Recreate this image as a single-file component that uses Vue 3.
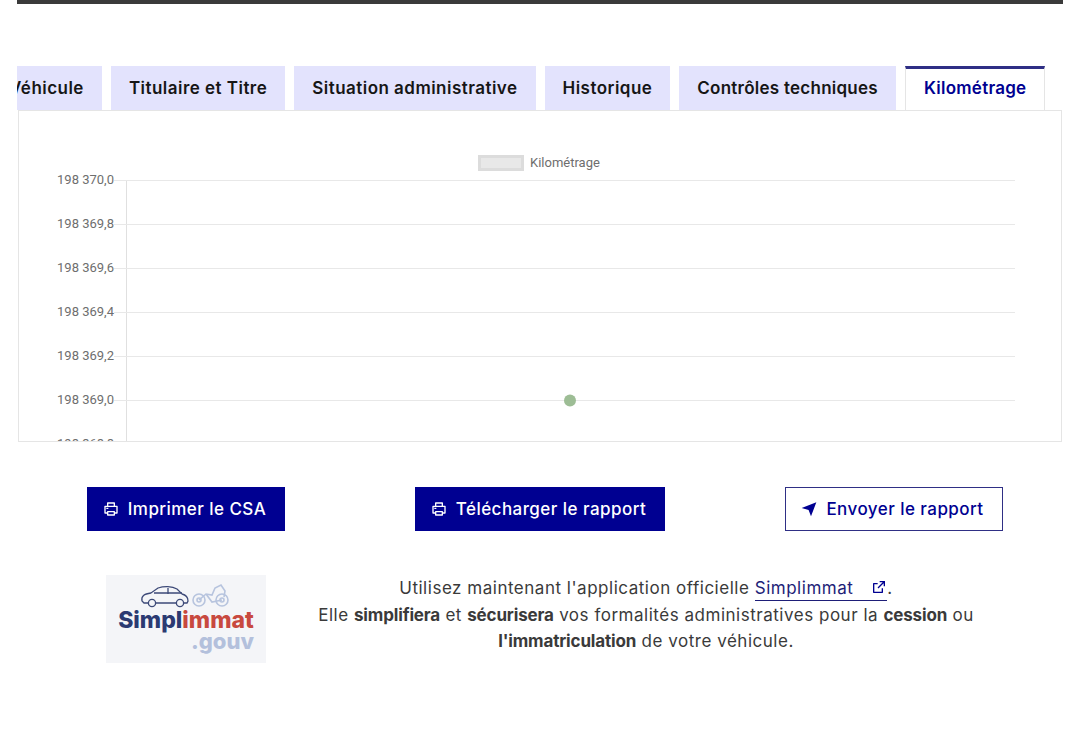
<template>
  <div class="page">
    <div class="top-bar"></div>

    <div class="tabs">
      <div class="tabs-inner">
        <div v-for="tab in tabs" :key="tab" class="tab" :class="{ active: tab == activeTab }">{{ tab }}</div>
      </div>
    </div>

    <div class="panel">
      <svg class="chart" viewBox="19 111 1042 331" width="1042" height="331">
        <rect x="479.5" y="156.5" width="43" height="13" fill="#e8e8e8" stroke="#dcdcdc" stroke-width="3" />
        <text x="530" y="167" class="legend">Kilométrage</text>
        <line x1="126.5" y1="180" x2="126.5" y2="442" class="axis" />
        <g v-for="(tick, i) in ticks" :key="tick">
          <line x1="114" :y1="180.5 + i * 44" x2="1015" :y2="180.5 + i * 44" class="grid" />
          <text x="114" :y="184 + i * 44" class="tick">{{ tick }}</text>
        </g>
        <circle cx="570" cy="400.5" r="6" fill="#9dbd95" />
      </svg>
    </div>

    <div class="actions">
      <button class="btn">
        <svg class="icon" viewBox="0 0 24 24"><path :d="printerPath" /></svg>
        Imprimer le CSA
      </button>
      <button class="btn">
        <svg class="icon" viewBox="0 0 24 24"><path :d="printerPath" /></svg>
        Télécharger le rapport
      </button>
      <button class="btn secondary">
        <svg class="icon" viewBox="0 0 24 24"><path d="M1 10.5 23 2l-8 21-3.6-9.4z" /></svg>
        Envoyer le rapport
      </button>
    </div>

    <div class="footer">
      <div class="logo">
        <svg class="logo-art" viewBox="0 0 90 26" width="90" height="26">
          <g fill="none" stroke="#b7c4de" stroke-width="1.6">
            <circle cx="59" cy="17" r="6" />
            <circle cx="82" cy="17" r="6" />
            <circle cx="59" cy="17" r="2" />
            <circle cx="82" cy="17" r="2" />
            <path d="M59 17l7-6 6 1 3-7 6-3 4 6-1 6M66 11l6 8 10-2" />
          </g>
          <g fill="#f4f5f8" stroke="#3d4a78" stroke-width="1.3">
            <path d="M2 18c-1-5 2-7 9-8l7-5c6-2 14-2 19 1l5 5c4 1 6 3 6 7l-1 2H4z" />
            <path d="M14 10h28M28 5v6" fill="none" />
            <circle cx="12" cy="20" r="3.6" />
            <circle cx="40" cy="20" r="3.6" />
          </g>
        </svg>
        <div class="logo-name">Simpl<span class="logo-red">immat</span></div>
        <div class="logo-gouv">.gouv</div>
      </div>
      <div class="notice">
        Utilisez maintenant l'application officielle
        <a class="link">Simplimmat<svg class="ext" viewBox="0 0 24 24"><path d="M10 6v2H5v11h11v-5h2v6a1 1 0 0 1-1 1H4a1 1 0 0 1-1-1V7a1 1 0 0 1 1-1h6zm11-3v8h-2V6.413l-7.793 7.794-1.414-1.414L17.585 5H13V3h8z" /></svg></a>.<br>
        Elle <b>simplifiera</b> et <b>sécurisera</b> vos formalités administratives pour la <b>cession</b> ou<br>
        <b>l'immatriculation</b> de votre véhicule.
      </div>
    </div>
  </div>
</template>

<script setup>
const tabs = ["Véhicule", "Titulaire et Titre", "Situation administrative", "Historique", "Contrôles techniques", "Kilométrage"];
const activeTab = "Kilométrage";

const ticks = ["198 370,0", "198 369,8", "198 369,6", "198 369,4", "198 369,2", "198 369,0", "198 368,8"];

const printerPath = "M6 19H3a1 1 0 0 1-1-1V8a1 1 0 0 1 1-1h3V3a1 1 0 0 1 1-1h10a1 1 0 0 1 1 1v4h3a1 1 0 0 1 1 1v10a1 1 0 0 1-1 1h-3v2a1 1 0 0 1-1 1H7a1 1 0 0 1-1-1v-2zm0-2v-1a1 1 0 0 1 1-1h10a1 1 0 0 1 1 1v1h2V9H4v8h2zM8 4v3h8V4H8zm0 13v3h8v-3H8zm-3-7h3v2H5v-2z";
</script>

<style>
body {
  background: #fff;
}
</style>

<style scoped>
.page {
  width: 1080px;
  height: 731px;
  overflow: hidden;
  font-family: "Inter", "Open Sans", sans-serif;
  color: #3a3a3a;
}

.top-bar {
  height: 4px;
  margin: 0 17px;
  background: #3a3a3a;
}

.tabs {
  margin: 62px 17px 0 17px;
  height: 44px;
  overflow: hidden;
}

.tabs-inner {
  display: flex;
  gap: 9px;
  margin-left: -26px;
  height: 44px;
}

.tab {
  flex: none;
  display: flex;
  align-items: center;
  padding: 0 18px;
  background: #e3e3fd;
  color: #161616;
  font-size: 17px;
  font-weight: 600;
  letter-spacing: 0.47px;
  white-space: nowrap;
}

.tab:nth-child(n+5) {
  letter-spacing: 0.25px;
}

.tab.active {
  background: #fff;
  color: #000091;
  border-top: 3px solid #2f2f85;
  border-left: 1px solid #e5e5e5;
  border-right: 1px solid #e5e5e5;
  padding-bottom: 3px;
}

.panel {
  height: 332px;
  margin: 0 18px;
  box-sizing: border-box;
  border: 1px solid #e5e5e5;
  overflow: hidden;
}

.chart {
  display: block;
}

.legend {
  font: 13px Roboto, sans-serif;
  fill: #6e6e6e;
}

.tick {
  font: 13px Roboto, sans-serif;
  fill: #6e6e6e;
  text-anchor: end;
}

.grid {
  stroke: #e8e8e8;
  stroke-width: 1;
}

.axis {
  stroke: #e0e0e0;
  stroke-width: 1;
}

.actions {
  display: grid;
  grid-template-columns: repeat(3, 354px);
  justify-content: center;
  justify-items: center;
  margin-top: 45px;
}

.btn {
  display: flex;
  align-items: center;
  gap: 9px;
  height: 44px;
  padding: 0 18px 0 15px;
  box-sizing: border-box;
  border: 1px solid #000091;
  background: #000091;
  color: #fff;
  font-family: inherit;
  font-size: 17px;
  font-weight: 500;
  letter-spacing: 0.45px;
  white-space: nowrap;
}

.btn.secondary {
  background: #fff;
  color: #000091;
  border-color: #2f2f85;
}

.icon {
  width: 16px;
  height: 16px;
  fill: currentColor;
}

.footer {
  display: flex;
  margin: 44px 0 0 106px;
}

.logo {
  width: 160px;
  height: 88px;
  box-sizing: border-box;
  padding: 8px 12px 0 12px;
  background: #f4f5f8;
  font-weight: 800;
}

.logo-art {
  display: block;
  margin-left: 22px;
}

.logo-name {
  font-size: 23px;
  line-height: 22px;
  color: #2b3a72;
  text-align: center;
  white-space: nowrap;
}

.logo-red {
  color: #c8493f;
}

.logo-gouv {
  font-size: 22px;
  line-height: 20px;
  color: #b3c0dc;
  text-align: right;
}

.notice {
  width: 700px;
  margin-left: 30px;
  font-size: 17px;
  line-height: 26.5px;
  letter-spacing: 0.52px;
  text-align: center;
}

.notice b {
  font-weight: 700;
  letter-spacing: -0.15px;
}

.link {
  color: #1e1e78;
  border-bottom: 1px solid #1e1e78;
  padding-bottom: 2px;
}

.ext {
  width: 16px;
  height: 16px;
  margin-left: 18px;
  fill: #000091;
  vertical-align: -1px;
}
</style>
